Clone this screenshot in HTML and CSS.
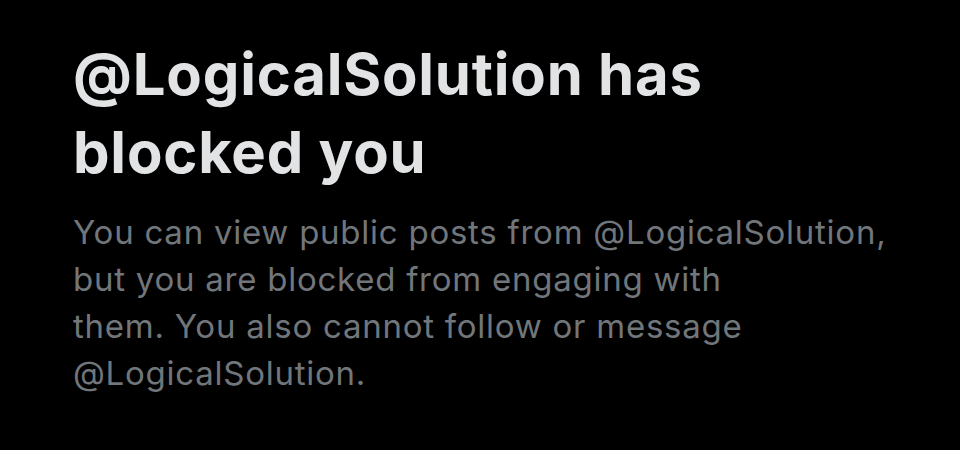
FILE: index.html
```html
<!DOCTYPE html>
<html>
<head>
<meta charset="utf-8">
<link rel="stylesheet" href="styles.css">
</head>
<body>
<main class="panel">
  <h1 class="title">@LogicalSolution has<br>blocked you</h1>
  <p class="desc">You can view public posts from @LogicalSolution,<br>but you are blocked from engaging with<br>them. You also cannot follow or message<br>@LogicalSolution.</p>
</main>
</body>
</html>
```
FILE: styles.css
```css
html, body {
  margin: 0;
  padding: 0;
  background: #000;
  width: 960px;
  height: 450px;
  overflow: hidden;
}
.panel {
  padding: 35px 0 0 73px;
  display: flex;
  flex-direction: column;
  gap: 18px;
}
.title {
  margin: 0;
  font-family: Inter, "Liberation Sans", sans-serif;
  font-weight: 700;
  font-size: 58px;
  line-height: 78px;
  color: #e1e3e4;
  letter-spacing: 0.8px;
  white-space: nowrap;
}
.desc {
  margin: 0;
  font-family: Inter, "Liberation Sans", sans-serif;
  font-weight: 400;
  font-size: 33px;
  line-height: 47px;
  color: #71767b;
  letter-spacing: 0.75px;
  white-space: nowrap;
}
```
